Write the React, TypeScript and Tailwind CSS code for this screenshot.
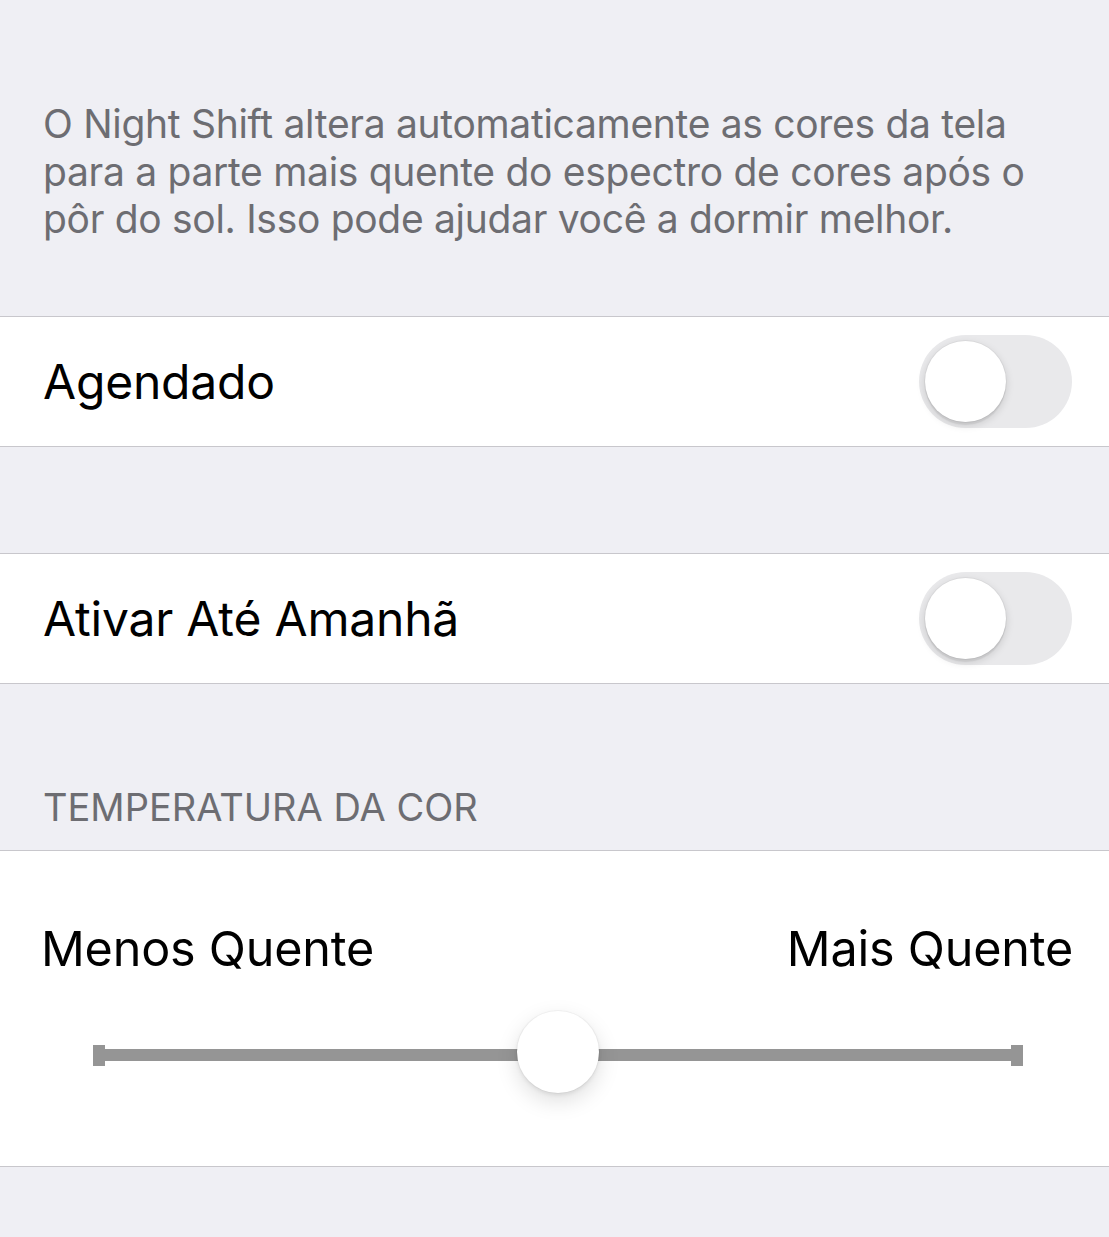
import React from "react";

const Toggle = () => (
  <div className="w-[153px] h-[93px] rounded-full bg-[#e9e9eb] p-[6px] flex items-center">
    <div className="w-[81px] h-[81px] rounded-full bg-white shadow-[0_3px_8px_rgba(0,0,0,0.15),0_3px_1px_rgba(0,0,0,0.06),0_0_0_1px_rgba(0,0,0,0.04)]" />
  </div>
);

const Row = ({ label }: { label: string }) => (
  <div className="h-[131px] bg-white border-y border-[#c8c7cc] flex items-center justify-between pl-[43px] pr-[37px]">
    <span className="text-[48px] text-black tracking-[-0.2px]">{label}</span>
    <Toggle />
  </div>
);

export default function App() {
  return (
    <div className="min-h-[1237px] w-full bg-[#efeff4] font-['Inter','Liberation_Sans',sans-serif] overflow-hidden">
      <div className="h-[316px] pt-[100px] pl-[43px]">
        <p className="w-[1000px] text-[39px] leading-[47.5px] text-[#6d6d72] tracking-[-0.3px]">
          O Night Shift altera automaticamente as cores da tela para a parte mais quente do espectro de cores após o pôr do sol. Isso pode ajudar você a dormir melhor.
        </p>
      </div>

      <Row label="Agendado" />
      <div className="h-[106px]" />
      <Row label="Ativar Até Amanhã" />

      <div className="h-[166px] pt-[100px] pl-[43px]">
        <span className="block text-[38px] leading-[46px] text-[#6d6d72] uppercase">
          Temperatura da Cor
        </span>
      </div>

      <div className="h-[317px] bg-white border-y border-[#c8c7cc]">
        <div className="pt-[68px] pl-[41px] pr-[36px] flex justify-between">
          <span className="text-[48.5px] leading-[60px] text-black tracking-[-0.2px]">Menos Quente</span>
          <span className="text-[48.5px] leading-[60px] text-black tracking-[-0.2px]">Mais Quente</span>
        </div>
        <div className="mt-[35px] ml-[93px] mr-[86px] h-[82px] relative flex items-center">
          <div className="w-[12px] h-[21px] bg-[#959595]" />
          <div className="flex-1 h-[12px] bg-[#959595]" />
          <div className="w-[12px] h-[21px] bg-[#959595]" />
          <div className="absolute left-[424px] top-[-3px] w-[82px] h-[82px] rounded-full bg-white shadow-[0_8px_22px_rgba(0,0,0,0.13),0_2px_4px_rgba(0,0,0,0.08),0_0_0_1px_rgba(0,0,0,0.03)]" />
        </div>
      </div>
    </div>
  );
}
